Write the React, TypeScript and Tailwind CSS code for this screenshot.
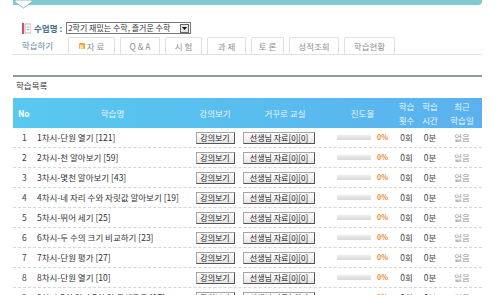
const lessons = [
  { no: 1, title: "1차시-단원 열기 [121]" },
  { no: 2, title: "2차시-천 알아보기 [59]" },
  { no: 3, title: "3차시-몇천 알아보기 [43]" },
  { no: 4, title: "4차시-네 자리 수와 자릿값 알아보기 [19]" },
  { no: 5, title: "5차시-뛰어 세기 [25]" },
  { no: 6, title: "6차시-두 수의 크기 비교하기 [23]" },
  { no: 7, title: "7차시-단원 평가 [27]" },
  { no: 8, title: "8차시-단원 열기 [10]" },
  { no: 9, title: "9차시-2의 단과 5의 단 곱셈구구 [17]" },
];

const tabs = [
  { label: "자 료", w: "w-[47px]", isNew: true },
  { label: "Q & A", w: "w-[40px]" },
  { label: "시 험", w: "w-[37px]" },
  { label: "과 제", w: "w-[39px]" },
  { label: "토 론", w: "w-[33px]" },
  { label: "성적조회", w: "w-[50px]" },
  { label: "학습현황", w: "w-[51px]" },
];

const cols = "grid grid-cols-[22px_155px_50px_90px_65px_23px_24px_40px]";

function OldButton({ children, className = "" }: { children: React.ReactNode; className?: string }) {
  return (
    <span
      className={`inline-flex h-[12px] items-center justify-center border border-[#a5a5a5] border-b-[#555] border-r-[#555] bg-gradient-to-b from-white to-[#e6e6e6] text-[8px] leading-none text-[#222] whitespace-nowrap ${className}`}
    >
      {children}
    </span>
  );
}

export default function App() {
  return (
    <div className="w-[500px] h-[295px] overflow-hidden bg-white font-['Noto_Sans_CJK_KR','Noto_Sans',sans-serif] text-[#444]">
      {/* top banner */}
      <div className="ml-[13px] w-[469px] h-[9px] flex items-start">
        <svg width="21" height="9" viewBox="0 0 21 9" className="shrink-0">
          <rect x="0" y="0" width="21" height="5" fill="#7fc9d2" />
          <path d="M2 0 L19 0 L19 2 L10.5 8 L2 2 Z" fill="#fff" stroke="#8bb8c6" strokeWidth="1" />
        </svg>
        <div className="flex-1 h-[5px] bg-[#7fc9d2] rounded-br-[4px]" />
      </div>

      {/* course select */}
      <div className="mt-[13px] h-[12px] flex items-center pl-[22px]">
        <svg width="9" height="11" viewBox="0 0 9 11" className="shrink-0">
          <rect x="0" y="0" width="2" height="11" fill="#d5506a" />
          <rect x="3" y="1" width="6" height="9" fill="#fff" stroke="#b9b9b9" strokeWidth="1" />
          <line x1="4.5" y1="4" x2="7.5" y2="4" stroke="#aaa" strokeWidth="1" />
          <line x1="4.5" y1="6.5" x2="7.5" y2="6.5" stroke="#aaa" strokeWidth="1" />
        </svg>
        <span className="ml-[3px] text-[8.5px] font-bold text-[#3f6d8c] leading-none">수업명 :</span>
        <div className="ml-[4px] w-[125px] h-[12px] border border-[#777] flex items-center">
          <span className="flex-1 pl-[1px] text-[8px] leading-none text-[#333] whitespace-nowrap">
            2학기 재밌는 수학, 즐거운 수학
          </span>
          <span className="w-[9px] h-[9px] mr-[1px] shrink-0 border border-[#666] bg-[#e4e4e4] flex items-center justify-center">
            <svg width="5" height="3" viewBox="0 0 5 3">
              <path d="M0 0 L5 0 L2.5 3 Z" fill="#111" />
            </svg>
          </span>
        </div>
      </div>

      {/* tabs */}
      <div className="mt-[3px] ml-[12px] w-[470px] h-[18px] flex items-end gap-[5px] border-b border-[#e2e2e2]">
        <div className="w-[51px] h-[17px] flex items-center justify-center text-[8.5px] text-[#5d8aa5] leading-none">
          학습하기
        </div>
        {tabs.map((t) => (
          <div
            key={t.label}
            className={`${t.w} h-[17px] flex items-center justify-center border border-b-0 border-[#e0e0e0] rounded-t-[2px] text-[8.5px] text-[#8e8e8e] leading-none whitespace-nowrap`}
          >
            {t.isNew && (
              <span className="mr-[2px] w-[6px] h-[6px] rounded-[1px] bg-[#f2a531] text-white text-[5px] font-bold flex items-center justify-center">
                N
              </span>
            )}
            {t.label}
          </div>
        ))}
      </div>

      {/* section title */}
      <div className="mt-[20px] ml-[13px] w-[469px] h-[2px] bg-[#8d9a9f]" />
      <div className="ml-[16px] mt-[2px] h-[12px] flex items-center text-[8.5px] text-[#333] leading-none">학습목록</div>

      {/* table */}
      <div className="ml-[13px] mt-[7px] w-[469px]">
        <div className={`${cols} h-[30px] items-center bg-gradient-to-r from-[#58c9ef] to-[#5ab1ee] text-[8.5px] leading-[14px] text-[#eaf6ff] text-center`}>
          <div className="font-bold text-white text-left pl-[5px]">No</div>
          <div>학습명</div>
          <div>강의보기</div>
          <div>거꾸로 교실</div>
          <div>진도율</div>
          <div>
            학습
            <br />
            횟수
          </div>
          <div>
            학습
            <br />
            시간
          </div>
          <div>
            최근
            <br />
            학습일
          </div>
        </div>
        {lessons.map((l) => (
          <div
            key={l.no}
            className={`${cols} h-[20px] items-center border-b border-dashed border-[#d6d6d6] text-[8.5px] leading-none text-[#444]`}
          >
            <div className="pl-[9px]">{l.no}</div>
            <div className="pl-[2px] whitespace-nowrap text-[#333]">{l.title}</div>
            <div className="flex justify-center">
              <OldButton className="w-[39px]">강의보기</OldButton>
            </div>
            <div className="pl-[3px]">
              <OldButton className="w-[72px]">선생님 자료[0][0]</OldButton>
            </div>
            <div className="flex items-center pl-[7px]">
              <div className="w-[34px] h-[5px] bg-gradient-to-b from-[#eeeeee] to-[#d9d9d9]" />
              <span className="ml-[6px] text-[7px] font-bold text-[#f0842a]">0%</span>
            </div>
            <div className="text-center">0회</div>
            <div className="text-center">0분</div>
            <div className="text-center text-[#999]">없음</div>
          </div>
        ))}
      </div>
    </div>
  );
}
